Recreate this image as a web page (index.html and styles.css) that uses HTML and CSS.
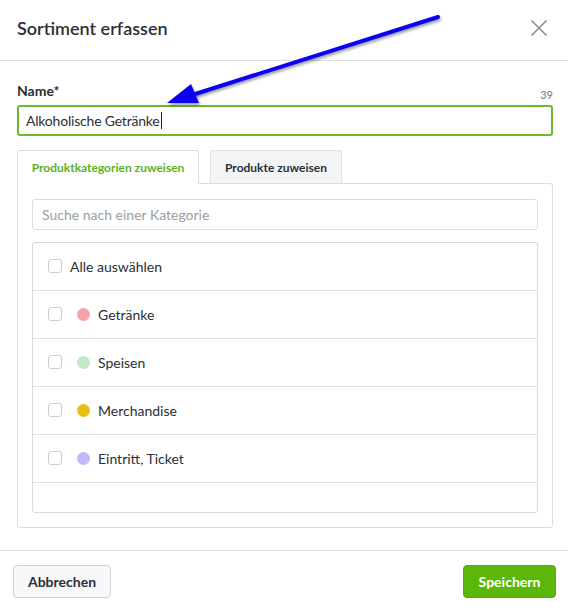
FILE: index.html
```html
<!DOCTYPE html>
<html lang="de">
<head>
<meta charset="utf-8">
<link rel="stylesheet" href="styles.css">
</head>
<body>
<div class="modal">
  <div class="header">
    <h1 class="title">Sortiment erfassen</h1>
    <svg class="close" width="18" height="18" viewBox="0 0 18 18"><path d="M1.5 1.5 L16.5 16.5 M16.5 1.5 L1.5 16.5" stroke="#8a8d91" stroke-width="1.6" fill="none"/></svg>
  </div>
  <div class="content">
    <div class="field-head">
      <label class="label">Name*</label>
      <span class="count">39</span>
    </div>
    <div class="name-input">Alkoholische Getränke<span class="caret"></span></div>
    <div class="tabs">
      <div class="tab active">Produktkategorien zuweisen</div>
      <div class="tab">Produkte zuweisen</div>
    </div>
    <div class="panel">
      <div class="search">Suche nach einer Kategorie</div>
      <div class="list">
        <div class="row"><span class="cb"></span><span class="txt">Alle auswählen</span></div>
        <div class="row"><span class="cb"></span><span class="dot pink"></span><span class="txt">Getränke</span></div>
        <div class="row"><span class="cb"></span><span class="dot green"></span><span class="txt">Speisen</span></div>
        <div class="row"><span class="cb"></span><span class="dot yellow"></span><span class="txt">Merchandise</span></div>
        <div class="row"><span class="cb"></span><span class="dot purple"></span><span class="txt">Eintritt, Ticket</span></div>
        <div class="row empty"></div>
      </div>
    </div>
  </div>
  <div class="footer">
    <button class="btn cancel">Abbrechen</button>
    <button class="btn save">Speichern</button>
  </div>
</div>
<svg class="arrow" width="568" height="610" viewBox="0 0 568 610">
  <defs>
    <filter id="sh" x="-20%" y="-20%" width="140%" height="140%">
      <feGaussianBlur in="SourceAlpha" stdDeviation="1.5"/>
      <feOffset dx="1" dy="2" result="b"/>
      <feComponentTransfer><feFuncA type="linear" slope="0.4"/></feComponentTransfer>
      <feMerge><feMergeNode/><feMergeNode in="SourceGraphic"/></feMerge>
    </filter>
  </defs>
  <g filter="url(#sh)">
    <line x1="438" y1="17" x2="192" y2="95" stroke="#0a00f0" stroke-width="4" stroke-linecap="round"/>
    <polygon points="167,103 191,84 199,103" fill="#0a00f0"/>
  </g>
</svg>
</body>
</html>
```
FILE: styles.css
```css
* { box-sizing: border-box; }
html, body { margin: 0; padding: 0; background: #fff; }
body {
  font-family: Lato, "Noto Sans", sans-serif;
  color: #2b2f36;
  width: 568px;
  height: 610px;
  overflow: hidden;
  position: relative;
}
.modal { width: 568px; }
.header {
  height: 61px;
  display: flex;
  align-items: center;
  justify-content: space-between;
  padding: 0 20px 0 17px;
  border-bottom: 1px solid #dcdde0;
}
.title {
  margin: 0 0 4px 0;
  font-size: 18px;
  font-weight: 600;
  color: #2b2f36;
}
.close { margin-top: -4px; }
.content { padding: 20px 15px 0 17px; }
.field-head {
  display: flex;
  justify-content: space-between;
  align-items: flex-end;
  height: 18px;
  margin-bottom: 6px;
}
.label { font-size: 14px; font-weight: 700; color: #2b2f36; }
.count { font-size: 11px; color: #777; margin-bottom: -2px; }
.name-input {
  height: 31px;
  border: 2px solid #6cb92f;
  border-radius: 3px;
  padding: 0 7px;
  display: flex;
  align-items: center;
  font-size: 14px;
  letter-spacing: -0.2px;
  color: #2b2f36;
}
.caret { display: inline-block; width: 1px; height: 17px; background: #222; margin-left: 1px; }
.tabs { display: flex; gap: 11px; margin-top: 14px; position: relative; z-index: 1; }
.tab {
  display: flex;
  align-items: center;
  justify-content: center;
  font-size: 12px;
  font-weight: 700;
  border: 1px solid #e2e3e6;
  border-bottom: none;
  border-radius: 3px 3px 0 0;
  background: #f3f4f6;
  color: #2b2f36;
  width: 132px;
  height: 33px;
}
.tab.active {
  width: 182px;
  height: 34px;
  background: #fff;
  color: #5db11e;
  border-color: #dcdde0;
}
.panel {
  border: 1px solid #dcdde0;
  border-radius: 0 3px 3px 3px;
  margin-top: -1px;
  padding: 15px 14px 14px 14px;
}
.search {
  height: 31px;
  border: 1px solid #dcdde0;
  border-radius: 3px;
  padding-left: 9px;
  display: flex;
  align-items: center;
  font-size: 14px;
  color: #9a9da3;
}
.list {
  margin-top: 12px;
  border: 1px solid #d7d9dd;
  border-radius: 3px;
}
.row {
  height: 48px;
  display: flex;
  align-items: center;
  padding-left: 15px;
  border-bottom: 1px solid #dfe1e4;
  font-size: 14px;
  padding-bottom: 1px;
}
.row.empty { height: 29px; border-bottom: none; }
.cb {
  width: 14px;
  height: 14px;
  border: 1px solid #c9ccd1;
  border-radius: 3px;
  background: #fff;
  margin-right: 8px;
}
.dot {
  width: 13px;
  height: 13px;
  border-radius: 50%;
  margin-left: 7px;
  margin-right: 8px;
}
.pink { background: #f7a1ab; }
.green { background: #c2e8c6; }
.yellow { background: #ecbe0f; }
.purple { background: #c6b5fb; }
.txt { color: #2b2f36; }
.footer {
  margin-top: 22px;
  border-top: 1px solid #dcdde0;
  display: flex;
  justify-content: space-between;
  padding: 14px 12px 0 13px;
}
.btn {
  height: 33px;
  font-family: inherit;
  font-size: 14px;
  font-weight: 700;
  border-radius: 4px;
  padding: 0;
}
.cancel {
  width: 98px;
  background: #f7f8fa;
  border: 1px solid #cfd2d6;
  color: #2b2f36;
}
.save {
  width: 93px;
  background: #5bb80a;
  border: 1px solid #55ab08;
  color: #fff;
}
.arrow { position: absolute; left: 0; top: 0; pointer-events: none; }
```
